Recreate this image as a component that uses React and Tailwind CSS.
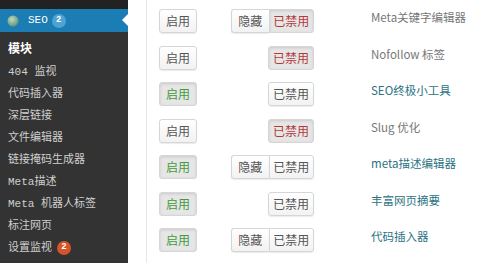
const menuItems = [
  '404 监视',
  '代码插入器',
  '深层链接',
  '文件编辑器',
  '链接掩码生成器',
  'Meta描述',
  'Meta 机器人标签',
  '标注网页',
];

const modules = [
  { label: 'Meta关键字编辑器', enabled: false, hide: true, disabled: true, link: false },
  { label: 'Nofollow 标签', enabled: false, hide: false, disabled: true, link: false },
  { label: 'SEO终极小工具', enabled: true, hide: false, disabled: false, link: true },
  { label: 'Slug 优化', enabled: false, hide: false, disabled: true, link: false },
  { label: 'meta描述编辑器', enabled: true, hide: true, disabled: false, link: true },
  { label: '丰富网页摘要', enabled: true, hide: false, disabled: false, link: true },
  { label: '代码插入器', enabled: true, hide: true, disabled: false, link: true },
];

const sideFont = { fontFamily: '"Liberation Mono", "Noto Sans CJK SC", monospace' };
const mainFont = { fontFamily: '"Noto Sans CJK SC", "Liberation Sans", sans-serif' };

const ToggleBtn = ({ pressed, tone, className = '', children }) => {
  const color = pressed
    ? tone === 'green'
      ? 'text-[#459a40]'
      : 'text-[#b23a3a]'
    : 'text-[#555]';
  return (
    <span
      className={`flex h-6 items-center justify-center border border-[#d6d6d6] text-[12px] ${color} ${
        pressed
          ? 'bg-[#e6e6e6] shadow-[inset_0_1px_3px_rgba(0,0,0,0.12)]'
          : 'bg-gradient-to-b from-white to-[#f2f2f2] shadow-[0_1px_1px_rgba(0,0,0,0.08)]'
      } ${className}`}
    >
      {children}
    </span>
  );
};

const Sidebar = () => (
  <aside className="flex h-[263px] w-[128px] shrink-0 flex-col bg-[#333]" style={sideFont}>
    <div className="h-[9px] bg-[#222]" />
    <div className="relative flex h-[23px] items-center bg-[#1b7db4] pl-[7px]">
      <svg width="12" height="12" viewBox="0 0 12 12">
        <defs>
          <radialGradient id="g" cx="0.4" cy="0.35" r="0.7">
            <stop offset="0" stopColor="#b9dcc0" />
            <stop offset="1" stopColor="#5f8f78" />
          </radialGradient>
        </defs>
        <circle cx="6" cy="6" r="5.5" fill="url(#g)" />
      </svg>
      <span className="ml-[9px] text-[11px] text-white">SEO</span>
      <span className="ml-[4px] flex h-[14px] w-[14px] items-center justify-center rounded-full bg-[#4fa3d3] text-[9px] font-bold text-white">
        2
      </span>
      <span className="absolute right-0 top-[5px] h-0 w-0 border-y-[6px] border-r-[6px] border-y-transparent border-r-white" />
    </div>
    <div className="mt-[7px] flex h-[22px] items-center pl-[8px] text-[12px] font-bold text-white">模块</div>
    {menuItems.map((item) => (
      <div key={item} className="flex h-[22px] items-center pl-[8px] text-[11px] text-[#cfcfcf]">
        {item}
      </div>
    ))}
    <div className="flex h-[22px] items-center pl-[8px] text-[11px] text-[#cfcfcf]">
      设置监视
      <span className="ml-[5px] flex h-[14px] w-[14px] items-center justify-center rounded-full bg-[#d5542a] text-[9px] font-bold text-white">
        2
      </span>
    </div>
  </aside>
);

export default function App() {
  return (
    <div className="flex h-[263px] w-[500px] overflow-hidden bg-white" style={mainFont}>
      <Sidebar />
      <div className="w-[18px] shrink-0" />
      <main className="flex-1 border-l border-[#e6e6e6] pt-[9px]">
        {modules.map((m) => (
          <div key={m.label} className="flex h-[36.5px] items-start">
            <div className="w-[84px] shrink-0 pl-[12px]">
              <ToggleBtn pressed={m.enabled} tone="green" className="w-[38px] rounded-[3px]">
                启用
              </ToggleBtn>
            </div>
            <div className="flex w-[83px] shrink-0 justify-end">
              {m.hide && (
                <ToggleBtn className="w-[38px] rounded-l-[3px] border-r-0">隐藏</ToggleBtn>
              )}
              <ToggleBtn
                pressed={m.disabled}
                tone="red"
                className={`w-[46px] ${m.hide ? 'rounded-r-[3px]' : 'rounded-[3px]'}`}
              >
                已禁用
              </ToggleBtn>
            </div>
            <div
              className={`ml-[57px] pt-[1px] text-[11.5px] leading-[14px] ${
                m.link ? 'text-[#2b7282]' : 'text-[#777]'
              }`}
            >
              {m.label}
            </div>
          </div>
        ))}
      </main>
    </div>
  );
}
